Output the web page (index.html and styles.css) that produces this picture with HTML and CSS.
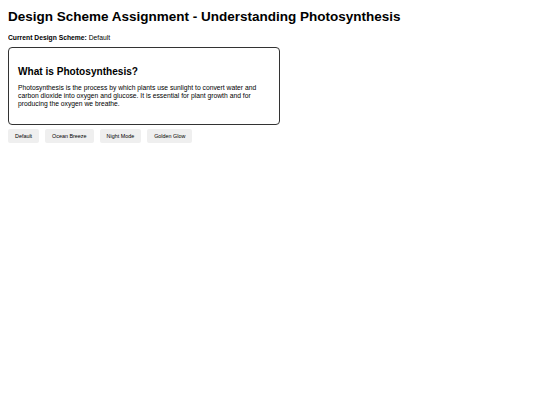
FILE: index.html
```html
<!DOCTYPE html>
<html>
<head>
<meta charset="utf-8">
<link rel="stylesheet" href="styles.css">
</head>
<body>
<h1 class="title">Design Scheme Assignment - Understanding Photosynthesis</h1>
<p class="current"><strong>Current Design Scheme:</strong> <span>Default</span></p>
<div class="card">
  <h2 class="card-title">What is Photosynthesis?</h2>
  <p class="card-text">Photosynthesis is the process by which plants use sunlight to convert water and carbon dioxide into oxygen and glucose. It is essential for plant growth and for producing the oxygen we breathe.</p>
</div>
<div class="buttons">
  <button class="btn">Default</button>
  <button class="btn">Ocean Breeze</button>
  <button class="btn">Night Mode</button>
  <button class="btn">Golden Glow</button>
</div>
</body>
</html>
```
FILE: styles.css
```css
html, body {
  background: #ffffff;
}
body {
  margin: 8px;
  font-family: "Liberation Sans", Arial, sans-serif;
  font-size: 6.75px;
  color: #000;
}
.title {
  font-size: 13.5px;
  font-weight: bold;
  margin: 1px 0 9px 0;
  line-height: 1.15;
}
.current {
  margin: 0 0 6px 0;
  line-height: 1.15;
}
.card {
  width: 252px;
  border: 1px solid #333;
  border-radius: 4px;
  padding: 9px 9px;
}
.card-title {
  font-size: 10.1px;
  font-weight: bold;
  margin: 9px 0 7px 0;
}
.card-text {
  margin: 0 0 7px 0;
  line-height: 1.15;
}
.buttons {
  display: flex;
  gap: 6px;
  margin-top: 4px;
}
.btn {
  font-family: "Liberation Sans", Arial, sans-serif;
  font-size: 5.4px;
  background: #efefef;
  border: none;
  border-radius: 2px;
  padding: 0 7px;
  height: 14px;
  color: #000;
}
```
